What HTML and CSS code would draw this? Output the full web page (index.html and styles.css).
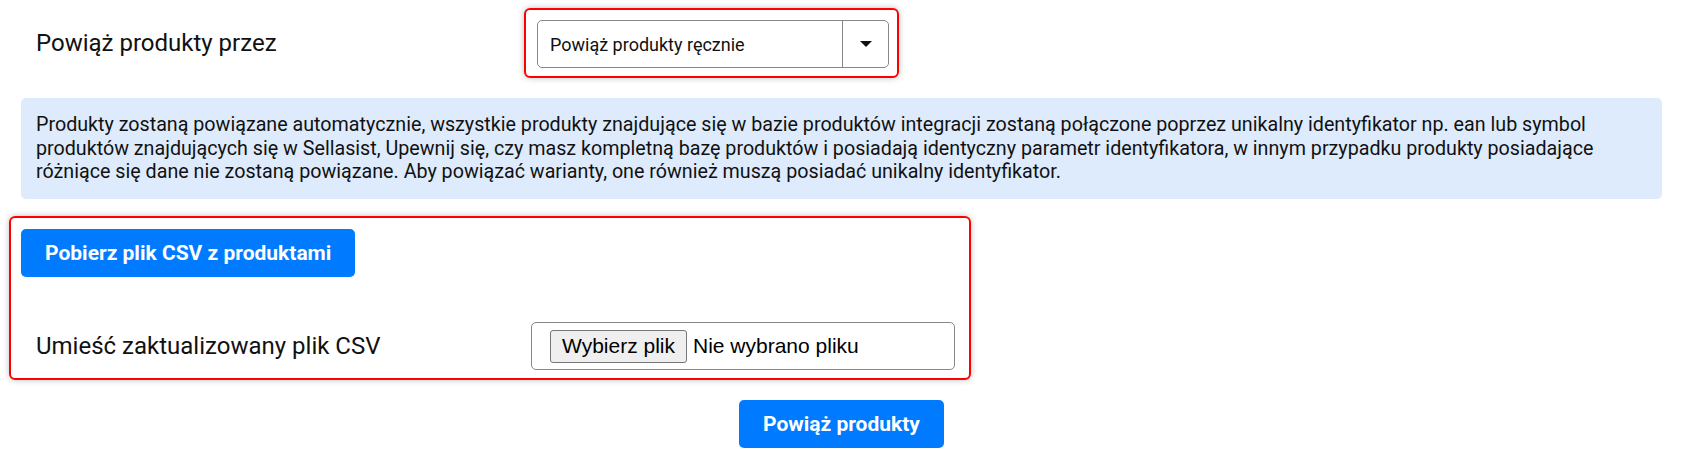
FILE: index.html
```html
<!DOCTYPE html>
<html lang="pl">
<head>
  <meta charset="UTF-8">
  <title>Powiąż produkty</title>
  <link rel="stylesheet" href="styles.css">
</head>
<body>
  <div class="container">
    <div class="form-row">
      <label class="field-label">Powiąż produkty przez</label>
      <div class="highlight-box select-wrap">
        <div class="select-box">
          <span class="select-value">Powiąż produkty ręcznie</span>
          <span class="select-arrow"><span class="caret"></span></span>
        </div>
      </div>
    </div>

    <div class="info-box">
      Produkty zostaną powiązane automatycznie, wszystkie produkty znajdujące się w bazie produktów integracji zostaną połączone poprzez unikalny identyfikator np. ean lub symbol produktów znajdujących się w Sellasist, Upewnij się, czy masz kompletną bazę produktów i posiadają identyczny parametr identyfikatora, w innym przypadku produkty posiadające różniące się dane nie zostaną powiązane. Aby powiązać warianty, one również muszą posiadać unikalny identyfikator.
    </div>

    <div class="highlight-box csv-box">
      <button class="btn">Pobierz plik CSV z produktami</button>
      <div class="form-row csv-row">
        <label class="field-label" for="csvFile">Umieść zaktualizowany plik CSV</label>
        <label class="file-input">
          <input type="file" id="csvFile" class="file-hidden">
          <span class="file-btn">Wybierz plik</span>
          <span class="file-name">Nie wybrano pliku</span>
        </label>
      </div>
    </div>

    <div class="actions">
      <button class="btn">Powiąż produkty</button>
    </div>
  </div>
</body>
</html>
```

FILE: styles.css
```css
body { margin: 0; font-family: Roboto, Arial, sans-serif; color: #111; background: #fff; }
.container { padding: 8px 23px 20px 21px; }

.form-row { display: flex; align-items: center; }
.field-label { width: 488px; padding-left: 15px; font-size: 24px; }

.highlight-box { border: 2px solid #f00; border-radius: 6px; box-shadow: 0 0 6px rgba(0, 0, 0, 0.25); }

.select-wrap { padding: 10px 8px 8px 11px; }
.select-box { display: flex; width: 350px; height: 46px; border: 1px solid #888; border-radius: 5px; background: #fff; }
.select-value { flex: 1; display: flex; align-items: center; padding-left: 12px; font-size: 18px; }
.select-arrow { width: 45px; border-left: 1px solid #888; display: flex; align-items: center; justify-content: center; }
.caret { width: 0; height: 0; border-left: 6px solid transparent; border-right: 6px solid transparent; border-top: 6px solid #111; }

.info-box { margin-top: 20px; background-color: #deebfc; border-radius: 5px; padding: 15px 15px 15.5px; font-size: 19.7px; line-height: 23.5px; }

.csv-box { margin: 17px 0 0 -12px; width: 936px; padding: 11px 12px 8px 10px; }
.csv-row { margin-top: 45px; }
.csv-row .field-label { width: 495px; }

.btn { height: 48px; padding: 0 24px; border: none; border-radius: 5px; background-color: #007bff; color: #fff; font-family: Roboto, Arial, sans-serif; font-weight: bold; font-size: 21px; cursor: pointer; }

.file-hidden { display: none; }
.file-input { display: flex; align-items: center; width: 424px; height: 48px; box-sizing: border-box; padding: 0 18px; border: 1px solid #888; border-radius: 5px; font-family: "Liberation Sans", Arial, sans-serif; font-size: 21px; color: #000; cursor: pointer; }
.file-btn { display: flex; align-items: center; height: 33px; box-sizing: border-box; padding: 0 11px; margin-right: 6px; border: 1px solid #767676; border-radius: 3px; background: #efefef; }

.actions { margin-top: 20px; display: flex; justify-content: center; }
```
